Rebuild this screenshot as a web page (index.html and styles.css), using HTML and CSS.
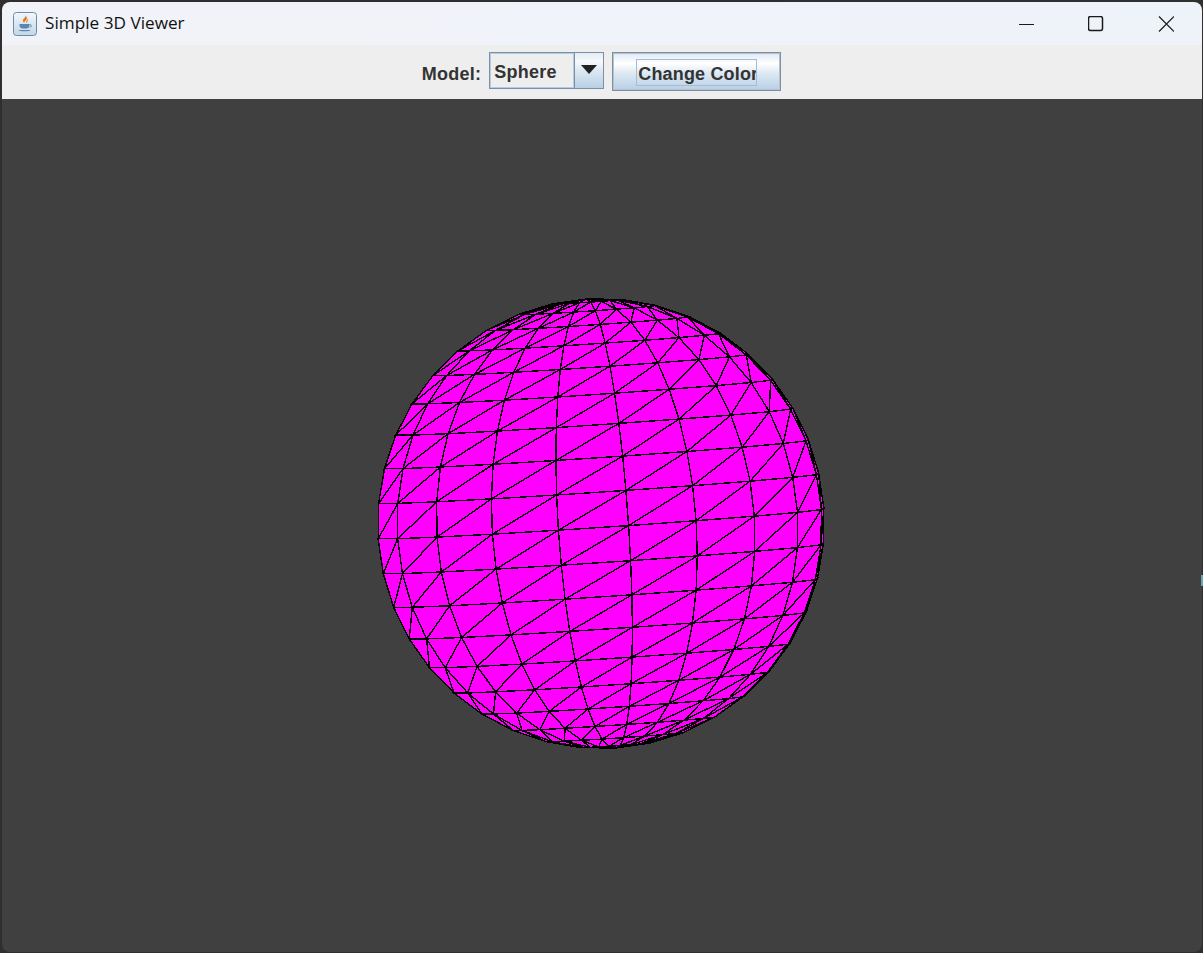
FILE: index.html
```html
<!DOCTYPE html>
<html lang="en">
	<head>
		<meta charset="utf-8">

		<title>Simple 3D Viewer</title>

		<link rel="stylesheet" href="styles.css">
	</head>
	<body>
	<div class="window">
		<div class="titlebar">
			<svg class="app-icon" width="24" height="24" viewBox="0 0 24 24">
				<defs>
					<linearGradient id="iconbg" x1="0" y1="0" x2="0" y2="1">
						<stop offset="0" stop-color="#f4f7fb"/>
						<stop offset="1" stop-color="#c3d6e8"/>
					</linearGradient>
				</defs>
				<rect x="0.5" y="0.5" width="23" height="23" rx="3" fill="url(#iconbg)" stroke="#6d8ba8"/>
				<path d="M12.5 3c1 2-2.5 3.5-2.5 5.5 0 1 .6 1.8 1.2 2.5-.2-1.5 3-3 2.6-5.200C13.600 4.700 13 3.800 12.500 3z" fill="#e8751a"/>
				<path d="M15 6.500c-1 1.200-2.200 2-2 3.500.1.600.4 1 .7 1.200-.1-1.200 2-2.500 1.300-4.700z" fill="#f09a3e"/>
				<path d="M6.500 12h10v1.200c0 2-1.500 3.300-3 3.300h-4c-1.500 0-3-1.300-3-3.300z" fill="#5b86ad"/>
				<path d="M16.500 12.600c2 -.4 2.800 1.900.2 2.900" fill="none" stroke="#5b86ad"/>
				<path d="M5 18h13c-1 1.800-11.500 1.800-13 0z" fill="#5b86ad"/>
			</svg>
			<span class="title">Simple 3D Viewer</span>
			<div class="controls">
				<span class="control">
					<svg width="16" height="16" viewBox="0 0 16 16"><path d="M1 8.500h15" stroke="#1a1a1a" fill="none"/></svg>
				</span>
				<span class="control">
					<svg width="16" height="16" viewBox="0 0 16 16"><rect x="0.500" y="0.500" width="14" height="14" rx="2" stroke="#1a1a1a" stroke-width="1.500" fill="none"/></svg>
				</span>
				<span class="control">
					<svg width="16" height="16" viewBox="0 0 16 16"><path d="M1 0.500l15 15M16 0.500l-15 15" stroke="#1a1a1a" stroke-width="1.200" fill="none"/></svg>
				</span>
			</div>
		</div>

		<div class="toolbar">
			<label class="model-label">Model:</label>
			<div class="combo">
				<span class="combo-value">Sphere</span>
				<span class="combo-arrow"><i></i></span>
			</div>
			<button class="color-btn"><span>Change Color</span></button>
		</div>

		<div class="viewport">
			<svg id="scene" class="scene"></svg>
		</div>
	</div>
	<span class="bleed"></span>

	<script src="sphere.js"></script>
	</body>
</html>
```

FILE: styles.css
```css
html, body {
	height: 100%;
}

body {
	margin: 0;
	padding: 2px 1px 1px 2px;
	box-sizing: border-box;
	background: #2f2f2f;
	overflow: hidden;
}

.window {
	display: flex;
	flex-direction: column;
	height: 100%;
	border-radius: 8px;
	overflow: hidden;
}

.titlebar {
	display: flex;
	align-items: center;
	flex: none;
	height: 43px;
	background: linear-gradient(90deg, #f2f3f9, #eef3f9);
	color: #111;
}

.app-icon {
	margin-left: 11px;
	margin-right: 8px;
}

.title {
	margin-bottom: 2px;
	font-family: "Open Sans", sans-serif;
	font-size: 17.2px;
	line-height: 24px;
}

.controls {
	display: flex;
	margin-left: auto;
	padding-right: 1px;
}

.control {
	display: flex;
	align-items: center;
	justify-content: center;
	width: 70px;
	height: 43px;
}

.toolbar {
	display: flex;
	align-items: flex-start;
	justify-content: center;
	flex: none;
	height: 54px;
	padding-top: 7px;
	padding-right: 1px;
	box-sizing: border-box;
	background: #eeeeee;
	color: #333333;
	font-family: "Liberation Sans", Arial, sans-serif;
	font-size: 18px;
	font-weight: bold;
}

.model-label {
	margin-top: 11px;
	margin-right: 8px;
	line-height: 22px;
	letter-spacing: 0.25px;
}

.combo {
	display: flex;
	width: 115px;
	height: 37px;
	box-sizing: border-box;
	border: 1px solid #7d8fa3;
	margin-right: 8px;
}

.combo-value {
	flex: 1;
	padding-left: 3px;
	border: 1px solid #b3cbe3;
	line-height: 36px;
	letter-spacing: 0.25px;
}

.combo-arrow {
	display: flex;
	align-items: center;
	justify-content: center;
	width: 28px;
	border-left: 1px solid #7d8fa3;
	background: linear-gradient(#e4edf5, #f6f9fc 25%, #dde8f3 50%, #b8cfe5);
}

.combo-arrow i {
	display: block;
	width: 0;
	height: 0;
	margin-bottom: 3px;
	border-left: 8px solid transparent;
	border-right: 8px solid transparent;
	border-top: 9px solid #222;
}

.color-btn {
	display: flex;
	align-items: center;
	justify-content: center;
	width: 169px;
	height: 39px;
	padding: 0;
	border: 1px solid #7d8fa3;
	outline: 1px solid #b4c1ce;
	outline-offset: -2px;
	background: linear-gradient(#dde8f3, #ffffff 28%, #dde8f3 55%, #b8cfe5);
	color: #333333;
	font: inherit;
}

.color-btn span {
	display: block;
	width: 121px;
	height: 27px;
	box-sizing: border-box;
	margin-top: 2px;
	padding-left: 1px;
	border: 1px solid #a3bdd6;
	line-height: 29px;
	letter-spacing: 0.17px;
	white-space: nowrap;
	overflow: hidden;
}

.viewport {
	flex: 1;
	min-height: 0;
	background: #404040;
}

.scene {
	display: block;
	width: 100%;
	height: 100%;
}

.bleed {
	position: absolute;
	left: 1201px;
	top: 575px;
	width: 2px;
	height: 11px;
	background: #6fa6b4;
}
```

FILE: sphere.js
```js
// same mesh as the viewer: 20 stacks, 20 slices, each quad split in two
var STACKS = 20;
var SLICES = 20;
var RADIUS = 225;
var CX = 599;
var CY = 424.5;
var LON_OFFSET = 7;
var PITCH = 1 * Math.PI / 180;
var ROLL = 3.8 * Math.PI / 180;

function project(lat, lon)
{
	var a = lat * Math.PI / 180;
	var b = (lon + LON_OFFSET) * Math.PI / 180;
	var x = Math.cos(a) * Math.sin(b);
	var y = -Math.sin(a);
	var z = Math.cos(a) * Math.cos(b);

	var y1 = y * Math.cos(PITCH) + z * Math.sin(PITCH);
	var z1 = z * Math.cos(PITCH) - y * Math.sin(PITCH);

	return {
		x: CX + RADIUS * (x * Math.cos(ROLL) + y1 * Math.sin(ROLL)),
		y: CY + RADIUS * (y1 * Math.cos(ROLL) - x * Math.sin(ROLL)),
		z: z1
	};
}

var tris = [];
for (var i = 0; i < STACKS; i++) {
	var south = -90 + i * 180 / STACKS;
	var north = south + 180 / STACKS;

	for (var j = 0; j < SLICES; j++) {
		var west = j * 360 / SLICES;
		var east = west + 360 / SLICES;
		var sw = project(south, west);
		var se = project(south, east);
		var nw = project(north, west);
		var ne = project(north, east);

		tris.push([sw, se, ne]);
		tris.push([sw, ne, nw]);
	}
}

function depth(t)
{
	return (t[0].z + t[1].z + t[2].z) / 3;
}

tris.sort(function(a, b){
	return depth(a) - depth(b);
});

var scene = document.getElementById('scene');
tris.forEach(function(t){
	if (depth(t) < -0.2) {
		return;
	}

	var poly = document.createElementNS('http://www.w3.org/2000/svg', 'polygon');
	poly.setAttribute('points', t.map(function(p){
		return p.x.toFixed(1) + ',' + p.y.toFixed(1);
	}).join(' '));
	poly.setAttribute('fill', '#ff00ff');
	poly.setAttribute('stroke', '#000');
	poly.setAttribute('stroke-width', '1.4');
	poly.setAttribute('shape-rendering', 'crispEdges');
	scene.appendChild(poly);
});
```
